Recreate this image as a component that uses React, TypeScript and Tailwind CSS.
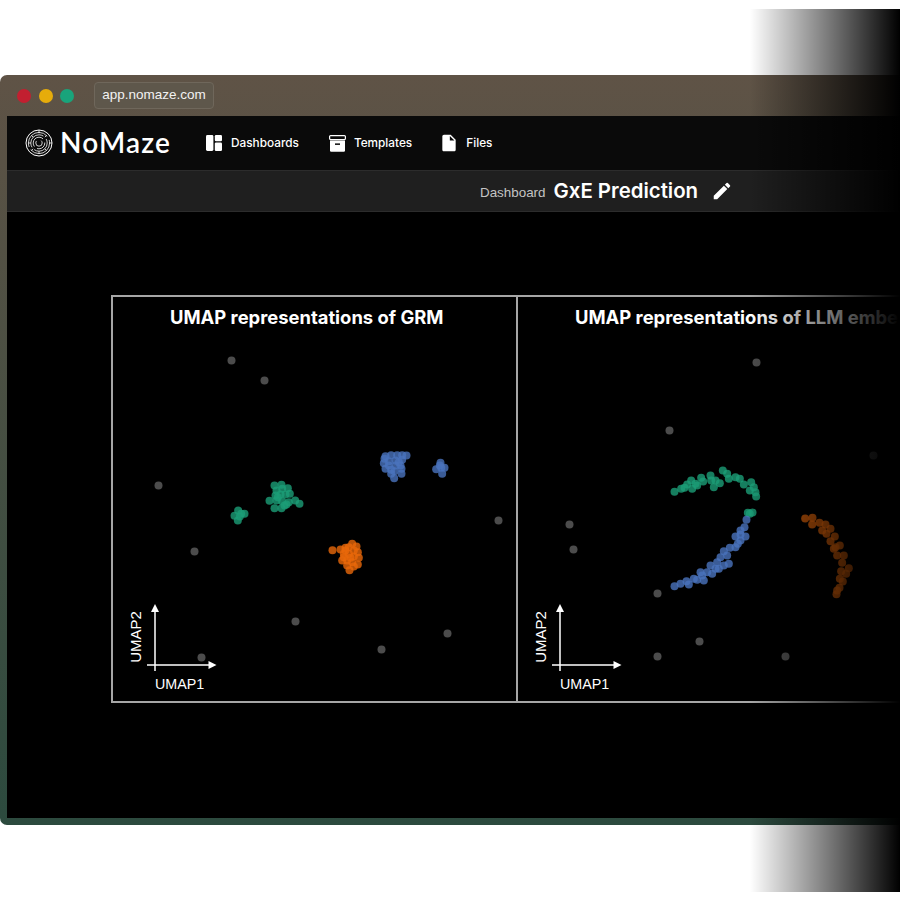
import type { ReactNode } from 'react'
import { MdEdit, MdInsertDriveFile } from 'react-icons/md'

type Pt = [number, number]

// points were read off 3x crops, so keep them in crop space and convert here
function fromCrop(x0: number, y0: number, pts: Pt[]): Pt[] {
  return pts.map(([x, y]) => [x0 + x / 3, y0 + y / 3])
}

const GREEN = '#1b9e77'
const BLUE = '#4a73bd'
const ORANGE = '#e8680a'
const GREY = '#4c4c4c'

const grm = {
  green: [
    ...fromCrop(200, 430, [[222, 165], [243, 163], [262, 173], [228, 180], [245, 175], [225, 195], [240, 192], [255, 192], [268, 190], [207, 211], [228, 210], [245, 212], [265, 215], [258, 222], [284, 210], [297, 220], [222, 233], [243, 233], [252, 225], [232, 200]]),
    ...fromCrop(200, 430, [[113, 240], [132, 250], [102, 256], [118, 258], [112, 270], [122, 250]]),
  ],
  blue: fromCrop(320, 440, [[195, 47], [212, 44], [230, 44], [245, 44], [258, 45], [190, 68], [205, 62], [225, 60], [245, 58], [195, 85], [212, 88], [225, 75], [240, 75], [205, 75], [222, 92], [243, 85], [243, 100], [221, 113], [212, 100], [235, 65], [192, 55], [360, 67], [347, 86], [362, 82], [372, 82], [365, 100], [358, 75]]),
  orange: fromCrop(320, 440, [[36, 329], [60, 327], [75, 322], [95, 310], [108, 318], [85, 320], [100, 330], [112, 335], [70, 340], [85, 340], [100, 348], [115, 352], [65, 360], [80, 360], [95, 365], [112, 372], [80, 375], [100, 378], [87, 389], [70, 350], [90, 352], [75, 330]]),
  grey: [[231, 360], [264, 380], [158, 485], [194, 551], [201, 657], [295, 621], [381, 649], [447, 633], [498, 520]] as Pt[],
}

const llm = {
  green: fromCrop(660, 460, [[42, 94], [62, 85], [72, 82], [92, 60], [95, 85], [105, 70], [122, 52], [128, 63], [150, 45], [152, 60], [160, 80], [165, 60], [178, 68], [187, 30], [200, 40], [205, 55], [225, 50], [238, 55], [250, 72], [272, 65], [280, 80], [285, 95], [287, 108], [268, 90], [80, 72], [110, 75], [262, 157], [276, 156], [268, 160]]),
  blue: fromCrop(660, 460, [[42, 377], [60, 370], [78, 362], [85, 372], [100, 355], [110, 358], [125, 345], [130, 360], [140, 335], [150, 315], [155, 340], [170, 305], [165, 325], [180, 290], [190, 272], [190, 315], [205, 310], [208, 262], [200, 285], [225, 260], [232, 250], [225, 228], [240, 222], [255, 228], [240, 240], [252, 200], [240, 210], [258, 178], [175, 325], [120, 335]]),
  orange: fromCrop(780, 500, [[74, 54], [96, 52], [95, 72], [117, 67], [135, 72], [125, 90], [150, 85], [138, 100], [163, 108], [150, 122], [178, 135], [160, 145], [165, 140], [170, 165], [190, 165], [185, 187], [205, 203], [182, 212], [197, 220], [178, 235], [187, 243], [177, 262], [170, 270], [168, 281]]),
  grey: [[756, 362], [669, 430], [873, 455], [569, 524], [573, 549], [657, 593], [699, 641], [657, 656], [785, 656]] as Pt[],
}

function Dots({ pts, color, r = 4, opacity = 0.8 }: { pts: Pt[]; color: string; r?: number; opacity?: number }) {
  return (
    <>
      {pts.map(([x, y], i) => (
        <circle key={i} cx={x + 0.5} cy={y + 0.5} r={r} fill={color} fillOpacity={opacity} />
      ))}
    </>
  )
}

function Axes({ x }: { x: number }) {
  return (
    <g>
      <path d={`M${x} 671V610M${x - 8} 665H${x + 55}`} stroke="#fff" strokeWidth={1.5} fill="none" />
      <path d={`M${x} 604l4 8h-8zM${x + 61.5} 665l-8 4v-8z`} fill="#fff" />
      <text x={x} y={689} fill="#fff" fontSize={14.3} fontFamily="'Liberation Sans', sans-serif">
        UMAP1
      </text>
      <text
        transform={`translate(${x - 14} 637) rotate(-90)`}
        textAnchor="middle"
        fill="#fff"
        fontSize={15}
        fontFamily="'Liberation Sans', sans-serif"
      >
        UMAP2
      </text>
    </g>
  )
}

function Panel({ title, data, left, axisX }: {
  title: string
  data: typeof grm
  left: number
  axisX: number
}) {
  return (
    <div className="flex h-[408px] w-[405px] shrink-0 flex-col border-y-2 border-l-2 border-[#a6a6a6]">
      <h3 className="truncate pt-[8px] pb-[2px] pl-[57px] text-[18.4px] leading-[24px] font-bold whitespace-nowrap text-white">
        {title}
      </h3>
      <svg viewBox={`${left} 331 403 370`} className="h-[370px] w-[403px]">
        <Dots pts={data.grey} color={GREY} opacity={1} />
        <Dots pts={data.green} color={GREEN} />
        <Dots pts={data.blue} color={BLUE} />
        <Dots pts={data.orange} color={ORANGE} />
        <Axes x={axisX} />
      </svg>
    </div>
  )
}

function MazeLogo() {
  return (
    <svg viewBox="0 0 28 28" className="h-[28px] w-[28px]" fill="none" stroke="#fff">
      <circle cx="14" cy="14" r="13" strokeWidth="1" />
      <circle cx="14" cy="14" r="10.6" strokeWidth="0.8" strokeDasharray="26 3 30 4" />
      <circle cx="14" cy="14" r="8.2" strokeWidth="0.8" strokeDasharray="18 3 22 4" />
      <circle cx="14" cy="14" r="5.8" strokeWidth="0.8" strokeDasharray="11 3 17 4" />
      <circle cx="14" cy="14" r="3.2" strokeWidth="0.8" strokeDasharray="12 5" />
      <path d="M14 1v3.4M24.6 14h2.4M14 22.2v2.4M3.4 14h2.4M19.8 8.2l1.8-1.8M8.2 19.8l-1.8 1.8M8.2 8.2 6.4 6.4M19.8 19.8l1.8 1.8" strokeWidth="0.8" />
    </svg>
  )
}

function DashboardIcon() {
  return (
    <svg viewBox="0 0 16 16" className="h-4 w-4" fill="#fff">
      <rect x="0" y="0" width="7.4" height="16" rx="1.4" />
      <rect x="8.8" y="0" width="7.2" height="6.2" rx="1.2" />
      <rect x="8.8" y="7.6" width="7.2" height="8.4" rx="1.2" />
    </svg>
  )
}

function ArchiveIcon() {
  return (
    <svg viewBox="0 0 17 17" className="h-[17px] w-[17px]">
      <rect x="0.6" y="0.6" width="15.8" height="4" rx="1" fill="none" stroke="#fff" strokeWidth="1.2" />
      <path d="M1 5.6h15v10a1.2 1.2 0 0 1-1.2 1.2H2.2A1.2 1.2 0 0 1 1 15.6z" fill="#fff" />
      <rect x="6" y="8.4" width="5" height="1.5" fill="#0a0a0a" />
    </svg>
  )
}

function NavItem({ icon, label, className }: { icon: ReactNode; label: string; className: string }) {
  return (
    <div className={`flex items-center ${className}`}>
      {icon}
      <span className="mt-[1px] text-[11.8px] font-medium text-white">{label}</span>
    </div>
  )
}

export default function App() {
  return (
    <div className="relative h-[900px] w-[900px] overflow-hidden bg-white font-['Inter',sans-serif]">
      <div className="pt-[75px]">
        <div className="flex h-[750px] w-full flex-col rounded-l-[7px] bg-[linear-gradient(to_bottom,#5f5346,#2c4a3e)] pb-[7px]">
          <div className="flex h-[41px] shrink-0 items-center pl-[17px]">
            <span className="h-[14px] w-[14px] rounded-full bg-[#c21f30]" />
            <span className="ml-[8px] h-[14px] w-[14px] rounded-full bg-[#e6ac0b]" />
            <span className="ml-[7px] h-[14px] w-[14px] rounded-full bg-[#19a47b]" />
            <div className="ml-[20px] flex h-[27px] w-[120px] items-center justify-center rounded-[4px] border border-[#6f675b] bg-[#5e574b] font-['Liberation_Sans',sans-serif] text-[13.5px] text-[#f2f2f2]">
              app.nomaze.com
            </div>
          </div>
          <div className="ml-[7px] flex min-h-0 flex-1 flex-col overflow-hidden bg-black">
            <div className="flex h-[54px] shrink-0 items-center bg-[#0a0a0a] pl-[18px]">
              <MazeLogo />
              <span className="mb-[2px] ml-[7px] w-[112px] font-['Lato',sans-serif] text-[28px] leading-none font-semibold tracking-[1.2px] whitespace-nowrap text-white">
                NoMaze
              </span>
              <NavItem icon={<DashboardIcon />} label="Dashboards" className="ml-[34px] gap-[9px]" />
              <NavItem icon={<ArchiveIcon />} label="Templates" className="ml-[30px] gap-[8px]" />
              <NavItem icon={<MdInsertDriveFile className="h-[20px] w-[20px] text-white" />} label="Files" className="ml-[27px] gap-[7px]" />
            </div>
            <div className="flex h-[42px] shrink-0 items-center border-y border-[#2c2c2c] bg-[#1f1f1f] pl-[473px]">
              <span className="mt-[5px] font-['Liberation_Sans',sans-serif] text-[13.4px] text-[#c4c4c4]">Dashboard</span>
              <span className="ml-[8px] text-[20.4px] font-semibold whitespace-nowrap text-white">GxE Prediction</span>
              <MdEdit className="ml-[13px] h-[22px] w-[22px] text-white" />
            </div>
            <div className="flex flex-1 items-start overflow-hidden pt-[83px] pl-[104px]">
              <Panel title="UMAP representations of GRM" data={grm} left={113} axisX={155} />
              <Panel title="UMAP representations of LLM embe" data={llm} left={518} axisX={560} />
            </div>
          </div>
        </div>
      </div>
      {/* fade to black that sits over the right edge of the window */}
      <div className="absolute top-[9px] left-[750px] h-[883px] w-[150px] bg-[linear-gradient(to_right,transparent,#000)]" />
    </div>
  )
}
